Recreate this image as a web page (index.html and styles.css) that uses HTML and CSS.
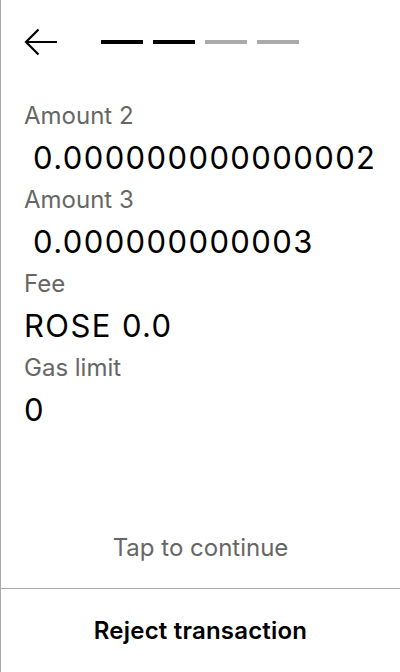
FILE: index.html
```html
<!DOCTYPE html>
<html>
<head>
<meta charset="utf-8">
<link rel="stylesheet" href="styles.css">
</head>
<body>
<div class="screen">
  <header class="top">
    <svg class="back" width="34" height="28" viewBox="0 0 34 28" aria-hidden="true">
      <path d="M33 14H2.5M14.5 1.5L2 14l12.5 12.5" fill="none" stroke="#000" stroke-width="2.2"/>
    </svg>
    <div class="steps">
      <span class="step done"></span>
      <span class="step done"></span>
      <span class="step"></span>
      <span class="step"></span>
    </div>
  </header>
  <main class="fields">
    <div class="label">Amount 2</div>
    <div class="value pad">0.000000000000002</div>
    <div class="label">Amount 3</div>
    <div class="value pad">0.000000000003</div>
    <div class="label">Fee</div>
    <div class="value">ROSE 0.0</div>
    <div class="label">Gas limit</div>
    <div class="value">0</div>
  </main>
  <div class="tap">Tap to continue</div>
  <footer class="reject">Reject transaction</footer>
</div>
</body>
</html>
```
FILE: styles.css
```css
html, body {
  margin: 0;
  padding: 0;
  background: #fff;
}
.screen {
  width: 400px;
  height: 672px;
  box-sizing: border-box;
  border-left: 1px solid #aaa;
  display: flex;
  flex-direction: column;
  font-family: Inter, "Noto Sans", sans-serif;
  color: #000;
}
.top {
  height: 95px;
  box-sizing: border-box;
  padding: 28px 0 0 23px;
  display: flex;
  align-items: flex-start;
}
.back {
  display: block;
}
.steps {
  display: flex;
  gap: 10px;
  margin-left: 43px;
  margin-top: 12px;
}
.step {
  width: 42px;
  height: 3.5px;
  background: #aaa;
}
.step.done {
  background: #000;
}
.fields {
  padding-left: 23px;
  flex: 1;
}
.label {
  font-size: 24px;
  line-height: 42px;
  color: #666;
}
.value {
  font-size: 31px;
  letter-spacing: 1.4px;
  line-height: 42px;
}
.value.pad {
  padding-left: 9px;
}
.tap {
  text-align: center;
  font-size: 24px;
  line-height: 42px;
  color: #666;
  padding-bottom: 19px;
}
.reject {
  border-top: 1px solid #aaa;
  height: 83px;
  display: flex;
  align-items: center;
  justify-content: center;
  font-size: 24px;
  font-weight: 600;
  letter-spacing: 0.2px;
}
```
